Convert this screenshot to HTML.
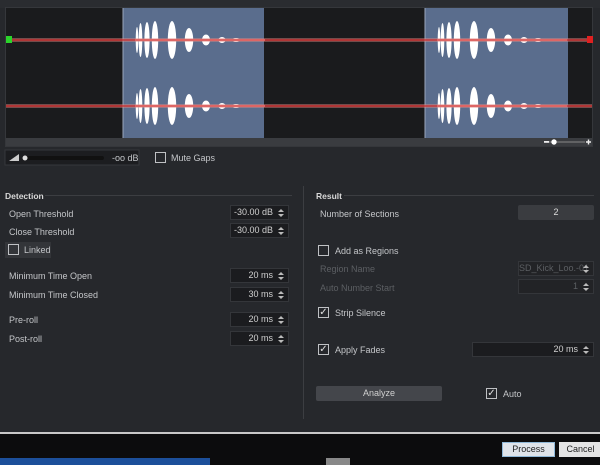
<!DOCTYPE html>
<html><head><meta charset="utf-8"><style>
*{margin:0;padding:0;box-sizing:border-box}
body{width:600px;height:465px;overflow:hidden;background:#26282c;font-family:"Liberation Sans",sans-serif;font-size:9px;color:#c9cbce;position:relative}
.a{position:absolute}
.lbl{position:absolute;font-size:9px;color:#c4c6c9}
.fld{position:absolute;background:#1b1c1f;border:1px solid #34363a;height:15px;text-align:right;padding-right:15px;line-height:13px;color:#d0d0d0;font-size:9px}
.fld:after{content:"";position:absolute;right:4px;top:3px;width:0;height:0;border-left:3px solid transparent;border-right:3px solid transparent;border-bottom:3px solid #bbb}
.fld:before{content:"";position:absolute;right:4px;top:8px;width:0;height:0;border-left:3px solid transparent;border-right:3px solid transparent;border-top:3px solid #bbb}
.cb{position:absolute;width:11px;height:11px;border:1px solid #bfc1c4;color:#e0e0e0;font-size:10px;line-height:9px;text-align:center}
.hd{position:absolute;font-weight:bold;color:#d8d8d8;font-size:8.5px}
.hl{position:absolute;height:1px;background:#3c3e42}
.dis{color:#5c5f63}
</style></head><body>
<div class="a" style="left:0;top:0;width:600px;height:8px;background:#2a2c30"></div>
<svg class="a" style="left:0;top:0" width="600" height="170">
<rect x="5" y="7" width="588" height="140" fill="#35373b"/>
<rect x="6" y="8" width="586" height="130" fill="#1a1b1d"/>
<rect x="123" y="8" width="141" height="130" fill="#5a6d8d"/>
<rect x="425" y="8" width="143" height="130" fill="#5a6d8d"/>
<line x1="123" y1="8" x2="123" y2="138" stroke="#9aa6ba"/>
<line x1="425" y1="8" x2="425" y2="138" stroke="#9aa6ba"/>
<defs><g id="w" fill="#fff">
<ellipse cx="14" cy="0" rx="1.3" ry="13"/><ellipse cx="17.5" cy="0" rx="1.8" ry="17"/><ellipse cx="24" cy="0" rx="2.6" ry="18"/>
<ellipse cx="32" cy="0" rx="3.2" ry="19"/><ellipse cx="49" cy="0" rx="4.2" ry="19"/><ellipse cx="66" cy="0" rx="4.2" ry="12"/>
<ellipse cx="83" cy="0" rx="4" ry="5.5"/><ellipse cx="99" cy="0" rx="3.5" ry="3"/><ellipse cx="113" cy="0" rx="3.5" ry="2"/>
<rect x="12" y="-1" width="130" height="2"/></g></defs>
<use href="#w" x="123" y="40"/><use href="#w" x="123" y="106"/>
<use href="#w" x="425" y="40"/><use href="#w" x="425" y="106"/>
<rect x="6" y="38" width="586" height="4" fill="#e08a86" opacity=".45"/>
<line x1="6" y1="40" x2="592" y2="40" stroke="#d42a2a" stroke-width="1.3"/>
<rect x="6" y="104" width="586" height="4" fill="#e08a86" opacity=".45"/>
<line x1="6" y1="106" x2="592" y2="106" stroke="#d42a2a" stroke-width="1.3"/>
<rect x="6" y="36" width="6" height="7" fill="#2bd42b"/>
<rect x="587" y="36" width="6" height="7" fill="#e02020"/>
<rect x="6" y="138" width="586" height="8" fill="#3a3c40"/>
<line x1="547" y1="142" x2="585" y2="142" stroke="#888"/>
<rect x="544" y="141" width="5" height="1.8" fill="#eee"/><circle cx="554" cy="142" r="2.7" fill="#fff"/>
<path d="M586 142h5M588.5 139.5v5" stroke="#eee" stroke-width="1.4"/>
<rect x="5" y="150" width="134" height="15" fill="#1c1d20" stroke="#35373b"/>
<path d="M9 161L19 154V161Z" fill="#ccc"/>
<rect x="22" y="156" width="82" height="4" fill="#111" rx="2"/>
<circle cx="25" cy="158" r="2.5" fill="#ddd"/>
</svg>
<div class="lbl" style="left:112px;top:153px">-oo dB</div>
<div class="cb" style="left:155px;top:152px"></div>
<div class="lbl" style="left:171px;top:153px">Mute Gaps</div>

<div class="hd" style="left:5px;top:191px">Detection</div><div class="hl" style="left:45px;top:195px;width:247px"></div>
<div class="lbl" style="left:9px;top:209px">Open Threshold</div><div class="fld" style="left:230px;top:205px;width:59px">-30.00 dB</div>
<div class="lbl" style="left:9px;top:227px">Close Threshold</div><div class="fld" style="left:230px;top:223px;width:59px">-30.00 dB</div>
<div class="a" style="left:5px;top:242px;width:46px;height:16px;background:#333539"></div>
<div class="cb" style="left:8px;top:244px"></div><div class="lbl" style="left:24px;top:245px">Linked</div>
<div class="lbl" style="left:9px;top:271px">Minimum Time Open</div><div class="fld" style="left:230px;top:268px;width:59px">20 ms</div>
<div class="lbl" style="left:9px;top:290px">Minimum Time Closed</div><div class="fld" style="left:230px;top:287px;width:59px">30 ms</div>
<div class="lbl" style="left:9px;top:315px">Pre-roll</div><div class="fld" style="left:230px;top:312px;width:59px">20 ms</div>
<div class="lbl" style="left:9px;top:334px">Post-roll</div><div class="fld" style="left:230px;top:331px;width:59px">20 ms</div>

<div class="a" style="left:303px;top:186px;width:1px;height:233px;background:#3c3e42"></div>
<div class="hd" style="left:316px;top:191px">Result</div><div class="hl" style="left:344px;top:195px;width:250px"></div>
<div class="lbl" style="left:320px;top:209px">Number of Sections</div>
<div class="a" style="left:518px;top:205px;width:76px;height:15px;background:#3a3c40;border-radius:2px;text-align:center;line-height:15px;color:#ddd">2</div>
<div class="cb" style="left:318px;top:245px"></div><div class="lbl" style="left:335px;top:246px">Add as Regions</div>
<div class="lbl dis" style="left:320px;top:264px">Region Name</div><div class="fld dis" style="left:518px;top:261px;width:76px;background:#222326;color:#5c5f63">SD_Kick_Loo.-01</div>
<div class="lbl dis" style="left:320px;top:283px">Auto Number Start</div><div class="fld dis" style="left:518px;top:279px;width:76px;background:#222326;color:#5c5f63">1</div>
<div class="cb" style="left:318px;top:307px">✓</div><div class="lbl" style="left:335px;top:308px">Strip Silence</div>
<div class="cb" style="left:318px;top:344px">✓</div><div class="lbl" style="left:335px;top:345px">Apply Fades</div>
<div class="fld" style="left:472px;top:342px;width:122px">20 ms</div>
<div class="a" style="left:316px;top:386px;width:126px;height:15px;background:#44464b;border-radius:2px;text-align:center;line-height:15px;color:#d0d0d0">Analyze</div>
<div class="cb" style="left:486px;top:388px">✓</div><div class="lbl" style="left:503px;top:389px">Auto</div>

<div class="a" style="left:0;top:432px;width:600px;height:2px;background:#c8c8c8"></div>
<div class="a" style="left:0;top:434px;width:600px;height:31px;background:#0c0c0d"></div>
<div class="a" style="left:502px;top:442px;width:53px;height:15px;background:#dfe4ea;border:1px solid #8fb8d8;color:#222;text-align:center;line-height:13px">Process</div>
<div class="a" style="left:559px;top:442px;width:43px;height:15px;background:#e4e4e4;color:#222;text-align:center;line-height:15px">Cancel</div>
<div class="a" style="left:0;top:458px;width:210px;height:7px;background:#1c4f9a"></div>
<div class="a" style="left:326px;top:458px;width:24px;height:7px;background:#888"></div>
</body></html>
